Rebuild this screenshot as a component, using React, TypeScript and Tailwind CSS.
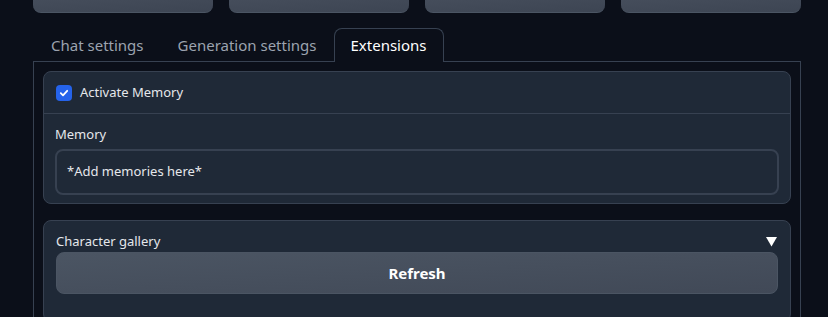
import React from "react";

export default function App() {
  const font = { fontFamily: '"Noto Sans", "Open Sans", sans-serif' };
  return (
    <div className="w-[828px] h-[317px] overflow-hidden bg-[#0b0f19] text-[#e5e7eb]" style={font}>
      <div className="mx-[33px] w-[768px]">
        <div className="flex gap-4 h-[13px]">
          {[0, 1, 2, 3].map((i) => (
            <div
              key={i}
              className="w-[180px] h-[13px] rounded-b-lg border-b border-[#4b5563] bg-gradient-to-br from-[#454d5b] to-[#3d4553]"
            />
          ))}
        </div>
        <div className="flex items-end h-[49px] border-b border-[#374151]">
          <div className="flex items-end h-[33px]">
            <div className="pl-[18px] pr-[17px] h-[32px] flex items-center text-[15px] text-[#9ca3af]">Chat settings</div>
            <div className="px-[17px] h-[32px] flex items-center text-[15px] text-[#9ca3af]">Generation settings</div>
            <div className="relative -mb-px px-[16px] h-[34px] flex items-center text-[15px] text-white border border-b-0 border-[#374151] rounded-t-lg bg-[#0b0f19]">
              Extensions
            </div>
          </div>
        </div>
        <div className="border-x border-[#374151] px-[9px] pt-[9px] h-[260px] flex flex-col gap-[16px]">
          <div className="rounded-lg border border-[#374151] bg-[#1f2937]">
            <div className="h-[42px] flex items-center px-[12px] gap-2 border-b border-[#374151]">
              <div className="w-4 h-4 rounded bg-[#2563eb] flex items-center justify-center">
                <svg width="10" height="10" viewBox="0 0 10 10" fill="none">
                  <path d="M1.8 5.2 L4 7.3 L8.2 2.8" stroke="white" strokeWidth="1.8" strokeLinecap="round" strokeLinejoin="round" />
                </svg>
              </div>
              <span className="text-[13px] text-[#e5e7eb]">Activate Memory</span>
            </div>
            <div className="px-[11px] pt-[10px] pb-[8px]">
              <div className="text-[13px] leading-[20px] mb-[5px] text-[#e5e7eb]">Memory</div>
              <div className="h-[46px] rounded-lg border-2 border-[#374151] flex items-center px-[10px] text-[13px] text-[#e5e7eb]">
                *Add memories here*
              </div>
            </div>
          </div>
          <div className="rounded-lg border border-[#374151] bg-[#1f2937] flex-1 px-[12px] pt-[11px]">
            <div className="flex items-center justify-between h-[20px]">
              <span className="text-[13px] text-[#e5e7eb]">Character gallery</span>
              <svg width="11" height="10" viewBox="0 0 11 10" className="mr-[1px]">
                <path d="M0 0 H11 L5.5 9.5 Z" fill="white" />
              </svg>
            </div>
            <div className="h-[42px] rounded-lg border border-[#4b5563] bg-gradient-to-br from-[#4b5563] to-[#414957] flex items-center justify-center text-[15px] font-bold text-white">
              Refresh
            </div>
          </div>
        </div>
      </div>
    </div>
  );
}
